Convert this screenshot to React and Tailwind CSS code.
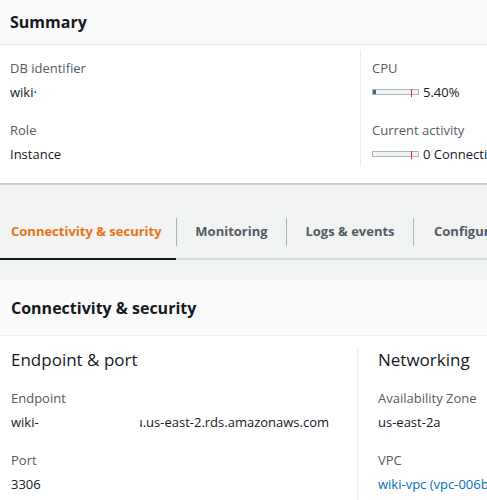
export default function App() {
  const font = { fontFamily: '"Open Sans", "Noto Sans", sans-serif' };
  const Bar = ({ fill }) => (
    <span className="relative inline-block shrink-0 w-[47px] h-[6px] border border-[#aab7b8] bg-[#f2f3f3] mr-[4px]">
      {fill ? <span className="absolute left-0 top-0 h-full w-[3px] bg-[#4b6584]" /> : null}
      <span className="absolute left-[38px] top-[-1px] h-[8px] w-[1px] bg-[#d13212]" />
    </span>
  );
  return (
    <div className="w-[487px] h-[500px] overflow-hidden bg-[#f2f3f3] text-[#16191f] flex flex-col" style={font}>
      {/* Summary card */}
      <div className="bg-white border-b-2 border-[#c8cece]">
        <div className="h-[45px] bg-[#fafafa] border-b border-[#eaeded] px-[10px] flex items-center">
          <span className="text-[16px] font-bold leading-none">Summary</span>
        </div>
        <div className="flex pt-[5px] pb-[17px]">
          <div className="w-[361px] shrink-0 border-r border-[#eaeded] pl-[10px] pt-[6px] text-[13px] leading-[24px]">
            <div className="text-[#545b64]">DB identifier</div>
            <div>wiki·</div>
            <div className="text-[#545b64] mt-[14px]">Role</div>
            <div>Instance</div>
          </div>
          <div className="pl-[11px] pt-[6px] text-[13px] leading-[24px] whitespace-nowrap">
            <div className="text-[#545b64]">CPU</div>
            <div className="flex items-center"><Bar fill />5.40%</div>
            <div className="text-[#545b64] mt-[14px]">Current activity</div>
            <div className="flex items-center"><Bar />0 Connections</div>
          </div>
        </div>
      </div>
      {/* Tabs */}
      <div className="pt-[31px]">
        <div className="relative flex pt-[2px] pb-[12px] border-b-2 border-[#d5dbdb] text-[13px] font-bold text-[#545b64] whitespace-nowrap">
          <div className="w-[176px] shrink-0 h-[28px] flex items-center pl-[11px] text-[#ec7211]">
            Connectivity &amp; security
          </div>
          <div className="w-[110px] shrink-0 h-[28px] flex items-center justify-center border-l border-[#aab7b8]">Monitoring</div>
          <div className="w-[127px] shrink-0 h-[28px] flex items-center justify-center border-l border-[#aab7b8]">Logs &amp; events</div>
          <div className="h-[28px] flex items-center pl-[20px] border-l border-[#aab7b8]">Configuration</div>
          <span className="absolute left-0 w-[176px] bottom-[-2px] h-[2px] bg-[#16191f]" />
        </div>
      </div>
      {/* Connectivity card */}
      <div className="mt-[20px] bg-white flex-1">
        <div className="h-[56px] bg-[#fafafa] border-b border-[#eaeded] px-[11px] flex items-center">
          <span className="text-[16px] font-bold leading-none">Connectivity &amp; security</span>
        </div>
        <div className="flex pt-[12px]">
          <div className="w-[358px] shrink-0 border-r border-[#eaeded] pl-[11px] pb-[20px] text-[13px] leading-[24px]">
            <div className="text-[17px] leading-[24px] mb-[14px]">Endpoint &amp; port</div>
            <div className="text-[#545b64]">Endpoint</div>
            <div className="whitespace-nowrap">wiki-<span className="inline-block w-[101px]" /><span className="inline-block w-[3px] overflow-hidden align-top" style={{ direction: 'rtl' }}>u</span>.us-east-2.rds.amazonaws.com</div>
            <div className="text-[#545b64] mt-[14px]">Port</div>
            <div>3306</div>
          </div>
          <div className="pl-[20px] text-[13px] leading-[24px] whitespace-nowrap">
            <div className="text-[17px] leading-[24px] mb-[14px]">Networking</div>
            <div className="text-[#545b64]">Availability Zone</div>
            <div>us-east-2a</div>
            <div className="text-[#545b64] mt-[14px]">VPC</div>
            <div className="text-[#0073bb]">wiki-vpc (vpc-006b</div>
          </div>
        </div>
      </div>
    </div>
  );
}
